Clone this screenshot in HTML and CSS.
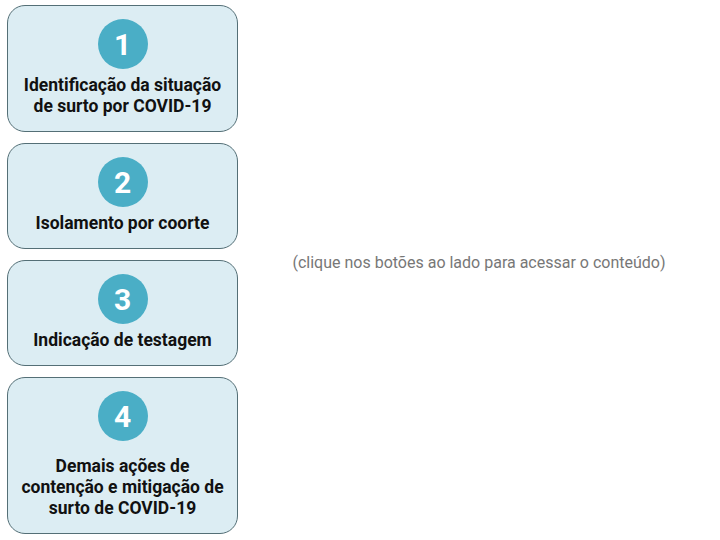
FILE: index.html
```html
<!DOCTYPE html>
<html lang="pt-BR">

<head>
    <meta charset="UTF-8">
    <meta name="viewport" content="width=device-width, initial-scale=1.0">
    <title>Surto por COVID-19</title>
    <link rel="stylesheet" href="styles.css">
</head>

<body>
    <div class="page">
        <div class="steps">
            <button class="step">
                <span class="step-num">1</span>
                <span class="step-title">Identificação da situação<br>de surto por COVID-19</span>
            </button>
            <button class="step">
                <span class="step-num">2</span>
                <span class="step-title">Isolamento por coorte</span>
            </button>
            <button class="step">
                <span class="step-num">3</span>
                <span class="step-title">Indicação de testagem</span>
            </button>
            <button class="step step-wide">
                <span class="step-num">4</span>
                <span class="step-title">Demais ações de<br>contenção e mitigação de<br>surto de COVID-19</span>
            </button>
        </div>
        <div class="content">
            <p class="hint">(clique nos botões ao lado para acessar o conteúdo)</p>
        </div>
    </div>
</body>

</html>
```

FILE: styles.css
```css
body {
    margin: 0;
    font-family: Roboto, "Liberation Sans", sans-serif;
    background-color: #fff;
}

.page {
    display: flex;
    height: 540px;
}

.steps {
    display: flex;
    flex-direction: column;
    gap: 11px;
    width: 231px;
    padding: 5px 0 0 7px;
}

.step {
    display: flex;
    flex-direction: column;
    align-items: center;
    padding: 13px 6px 14px 6px;
    background-color: #dcedf3;
    border: 1px solid #546f76;
    border-radius: 18px;
    font-family: inherit;
    cursor: pointer;
}

.step-num {
    display: flex;
    align-items: center;
    justify-content: center;
    width: 50px;
    height: 50px;
    border-radius: 50%;
    background-color: #4aaec6;
    color: #fff;
    font-size: 30px;
    font-weight: 700;
}

.step-title {
    margin-top: 6px;
    font-size: 17.5px;
    font-weight: 700;
    line-height: 21px;
    color: #111;
    text-align: center;
}

.step-wide .step-title {
    margin-top: 15px;
}

.content {
    flex: 1;
    display: flex;
    align-items: center;
    justify-content: center;
    padding-bottom: 16px;
}

.hint {
    margin: 0;
    font-size: 16px;
    color: #777;
}
```
